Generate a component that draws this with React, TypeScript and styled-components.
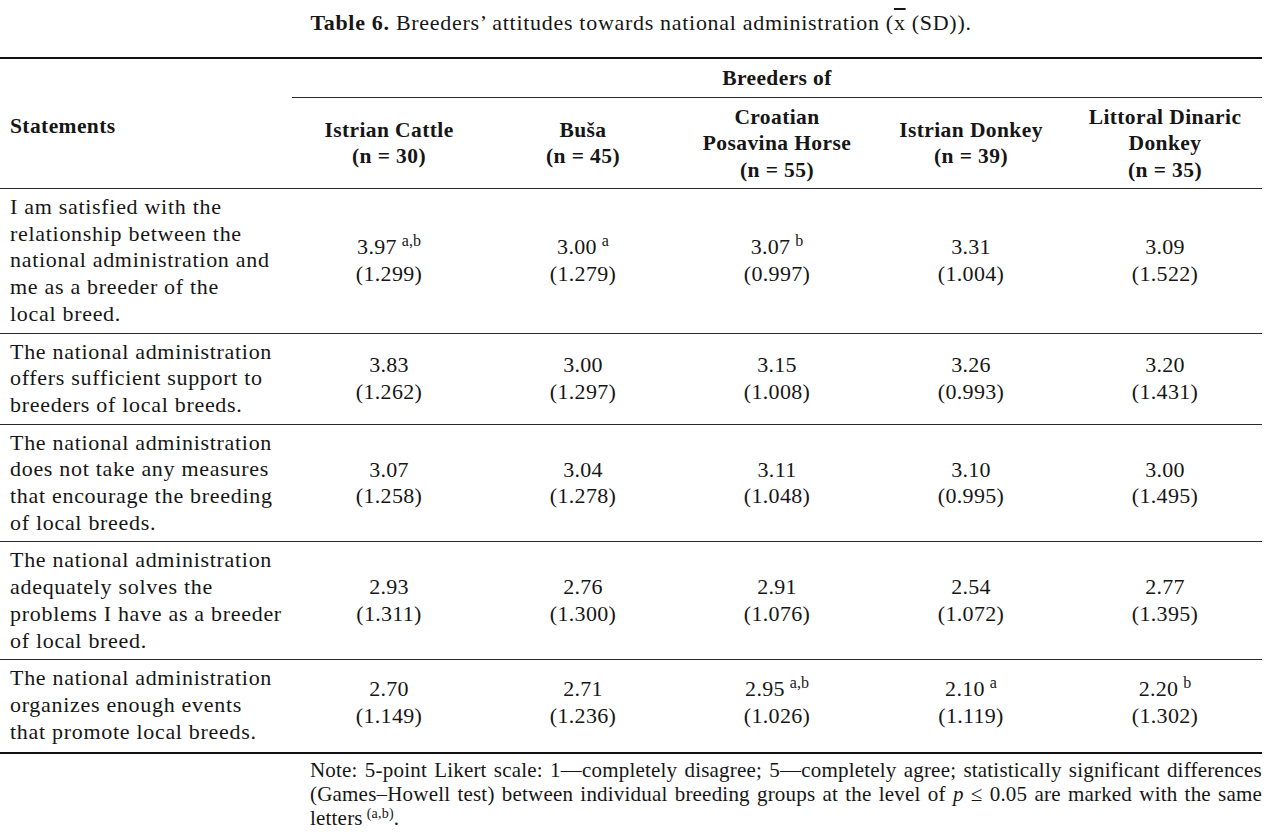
import React from "react";
import styled, { createGlobalStyle } from "styled-components";

const Global = createGlobalStyle`
  html, body { margin: 0; padding: 0; background: #ffffff; }
  body { font-family: "Liberation Serif", "Times New Roman", serif; color: #161616; }
`;

const Page = styled.div`
  width: 1280px;
  padding-top: 10px;
`;

const Caption = styled.div`
  text-align: center;
  font-size: 22px;
  line-height: 26px;
  letter-spacing: 0.7px;
  height: 47px;
  padding-left: 2px;
`;

const CapLabel = styled.b`
  font-weight: 700;
`;

const Xbar = styled.span`
  text-decoration: overline;
`;

const Table = styled.table`
  width: 1262px;
  border-collapse: collapse;
  table-layout: fixed;
  border-top: 2px solid #111;
  border-bottom: 2px solid #111;
`;

const StmtCol = styled.col`
  width: 292px;
`;

const DataCol = styled.col`
  width: 194px;
`;

const HeadCell = styled.th<{ $underline?: boolean; $align?: string }>`
  font-weight: 700;
  font-size: 21.5px;
  line-height: 26.5px;
  letter-spacing: 0.4px;
  text-align: ${(p) => p.$align || "center"};
  vertical-align: middle;
  padding: ${(p) =>
    p.$align === "left" ? "6px 0 0 10px" : p.$underline ? "6px 0 5px 0" : "6px 0 5px 0"};
  border-bottom: ${(p) => (p.$underline ? "1px solid #2a2a2a" : "none")};
`;

const BodyRow = styled.tr`
  border-top: 1px solid #2a2a2a;
  &:last-child td {
    padding-bottom: 7px;
  }
`;

const StmtCell = styled.td`
  font-size: 22px;
  line-height: 26.7px;
  letter-spacing: 0.7px;
  padding: 5px 0 5px 10px;
  vertical-align: middle;
  white-space: nowrap;
`;

const Line = styled.span`
  display: block;
`;

const ValCell = styled.td`
  font-size: 22px;
  line-height: 26.5px;
  letter-spacing: 0.3px;
  text-align: center;
  vertical-align: middle;
  padding: 0;
  white-space: nowrap;
`;

const Sup = styled.sup`
  font-size: 16px;
  line-height: 0;
  vertical-align: 0;
  position: relative;
  top: -8px;
  margin-left: 5px;
  letter-spacing: 0;
`;

const Note = styled.div`
  margin: 4px 0 0 310px;
  width: 952px;
  font-size: 21px;
  line-height: 24px;
  letter-spacing: 0.2px;
`;

const NoteLine = styled.span<{ $full?: boolean }>`
  display: block;
  text-align: justify;
  text-align-last: ${(p) => (p.$full ? "justify" : "left")};
`;

const NoteSup = styled.sup`
  font-size: 14px;
  line-height: 0;
  vertical-align: 0;
  position: relative;
  top: -7px;
  margin-left: 4px;
`;

type Val = { m: string; sd: string; s?: string };

const heads: string[][] = [
  ["Istrian Cattle", "(n = 30)"],
  ["Buša", "(n = 45)"],
  ["Croatian", "Posavina Horse", "(n = 55)"],
  ["Istrian Donkey", "(n = 39)"],
  ["Littoral Dinaric", "Donkey", "(n = 35)"],
];

const rows: { lines: string[]; vals: Val[] }[] = [
  {
    lines: [
      "I am satisfied with the",
      "relationship between the",
      "national administration and",
      "me as a breeder of the",
      "local breed.",
    ],
    vals: [
      { m: "3.97", s: "a,b", sd: "(1.299)" },
      { m: "3.00", s: "a", sd: "(1.279)" },
      { m: "3.07", s: "b", sd: "(0.997)" },
      { m: "3.31", sd: "(1.004)" },
      { m: "3.09", sd: "(1.522)" },
    ],
  },
  {
    lines: [
      "The national administration",
      "offers sufficient support to",
      "breeders of local breeds.",
    ],
    vals: [
      { m: "3.83", sd: "(1.262)" },
      { m: "3.00", sd: "(1.297)" },
      { m: "3.15", sd: "(1.008)" },
      { m: "3.26", sd: "(0.993)" },
      { m: "3.20", sd: "(1.431)" },
    ],
  },
  {
    lines: [
      "The national administration",
      "does not take any measures",
      "that encourage the breeding",
      "of local breeds.",
    ],
    vals: [
      { m: "3.07", sd: "(1.258)" },
      { m: "3.04", sd: "(1.278)" },
      { m: "3.11", sd: "(1.048)" },
      { m: "3.10", sd: "(0.995)" },
      { m: "3.00", sd: "(1.495)" },
    ],
  },
  {
    lines: [
      "The national administration",
      "adequately solves the",
      "problems I have as a breeder",
      "of local breed.",
    ],
    vals: [
      { m: "2.93", sd: "(1.311)" },
      { m: "2.76", sd: "(1.300)" },
      { m: "2.91", sd: "(1.076)" },
      { m: "2.54", sd: "(1.072)" },
      { m: "2.77", sd: "(1.395)" },
    ],
  },
  {
    lines: [
      "The national administration",
      "organizes enough events",
      "that promote local breeds.",
    ],
    vals: [
      { m: "2.70", sd: "(1.149)" },
      { m: "2.71", sd: "(1.236)" },
      { m: "2.95", s: "a,b", sd: "(1.026)" },
      { m: "2.10", s: "a", sd: "(1.119)" },
      { m: "2.20", s: "b", sd: "(1.302)" },
    ],
  },
];

export default function App() {
  return (
    <Page>
      <Global />
      <Caption>
        <CapLabel>Table 6.</CapLabel> Breeders’ attitudes towards national administration (
        <Xbar>x</Xbar> (SD)).
      </Caption>
      <Table>
        <colgroup>
          <StmtCol />
          <DataCol />
          <DataCol />
          <DataCol />
          <DataCol />
          <DataCol />
        </colgroup>
        <thead>
          <tr>
            <HeadCell rowSpan={2} $align="left">
              Statements
            </HeadCell>
            <HeadCell colSpan={5} $underline>
              Breeders of
            </HeadCell>
          </tr>
          <tr>
            {heads.map((h, i) => (
              <HeadCell key={i}>
                {h.map((l, j) => (
                  <Line key={j}>{l}</Line>
                ))}
              </HeadCell>
            ))}
          </tr>
        </thead>
        <tbody>
          {rows.map((r, i) => (
            <BodyRow key={i}>
              <StmtCell>
                {r.lines.map((l, j) => (
                  <Line key={j}>{l}</Line>
                ))}
              </StmtCell>
              {r.vals.map((v, j) => (
                <ValCell key={j}>
                  <Line>
                    {v.m}
                    {v.s && <Sup>{v.s}</Sup>}
                  </Line>
                  <Line>{v.sd}</Line>
                </ValCell>
              ))}
            </BodyRow>
          ))}
        </tbody>
      </Table>
      <Note>
        <NoteLine $full>
          Note: 5-point Likert scale: 1—completely disagree; 5—completely agree; statistically significant differences
        </NoteLine>
        <NoteLine $full>
          (Games–Howell test) between individual breeding groups at the level of <i>p</i> ≤ 0.05 are marked with the same
        </NoteLine>
        <NoteLine>
          letters<NoteSup>(a,b)</NoteSup>.
        </NoteLine>
      </Note>
    </Page>
  );
}
